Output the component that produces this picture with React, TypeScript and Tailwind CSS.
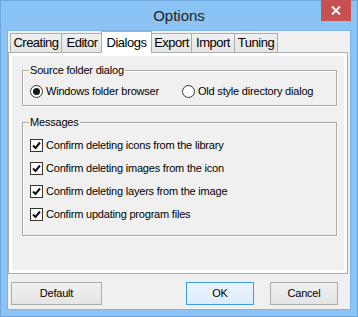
const ui = "font-['Liberation_Sans',Arial,sans-serif] text-[11px] tracking-[-0.2px] text-black";

const tabs = [
  { label: "Creating", cls: "ml-[2px] w-[52px]" },
  { label: "Editor", cls: "-ml-px w-[42px]" },
  { label: "Dialogs", cls: "-ml-[2px] w-[51px]", active: true },
  { label: "Export", cls: "-ml-px w-[41px]" },
  { label: "Import", cls: "-ml-px w-[44px]" },
  { label: "Tuning", cls: "-ml-px w-[44px]" },
];

const messages = [
  "Confirm deleting icons from the library",
  "Confirm deleting images from the icon",
  "Confirm deleting layers from the image",
  "Confirm updating program files",
];

const Radio = ({ checked }: { checked?: boolean }) => (
  <span className="w-[13px] h-[13px] rounded-full border border-[#333] bg-white flex items-center justify-center shrink-0">
    {checked && <span className="w-[7px] h-[7px] rounded-full bg-[#1a1a1a]" />}
  </span>
);

const Check = () => (
  <span className="w-[13px] h-[13px] border border-[#333] bg-white flex items-center justify-center shrink-0">
    <svg width="9" height="9" viewBox="0 0 9 9">
      <path d="M1 4.5 L3.5 7 L8 1.5" fill="none" stroke="#111" strokeWidth="2" />
    </svg>
  </span>
);

const Group = ({ title, className, children }: { title: string; className: string; children: React.ReactNode }) => (
  <div className={`relative border border-[#a9a9a9] shadow-[inset_1px_1px_0_#fff,1px_1px_0_#fff] ${className}`}>
    <span className="absolute -top-[8px] left-[6px] px-[1px] bg-[#f0f0f0] leading-[14px]">{title}</span>
    {children}
  </div>
);

const Button = ({ label, className }: { label: string; className: string }) => (
  <button className={`h-[23px] border flex items-center justify-center ${className}`}>{label}</button>
);

export default function App() {
  return (
    <div className={`w-[358px] h-[317px] bg-[#8cc3f5] border border-[#6ea6de] flex flex-col ${ui}`}>
      <div className="relative h-[29px] flex items-center justify-center">
        <span className="text-[15px] tracking-normal text-[#222] pt-[1px]">Options</span>
        <div className="absolute -top-px right-[6px] w-[30px] h-[21px] bg-[#c75050] flex items-center justify-center">
          <svg width="10" height="9" viewBox="0 0 10 9">
            <path d="M1 0.5 L9 8.5 M9 0.5 L1 8.5" stroke="#fff" strokeWidth="2" />
          </svg>
        </div>
      </div>

      <div className="mx-[6px] mb-[6px] flex-1 bg-[#f0f0f0] border border-[#7fb4e8] flex flex-col">
        <div className="h-[21px] flex items-end">
          {tabs.map((t) =>
            t.active ? (
              <div
                key={t.label}
                className={`relative z-10 h-[22px] -mb-px bg-white border border-b-0 border-[#acacac] flex items-center justify-center text-[13px] tracking-[-0.5px] ${t.cls}`}
              >
                {t.label}
              </div>
            ) : (
              <div
                key={t.label}
                className={`h-[19px] bg-gradient-to-b from-[#f0f0f0] to-[#e5e5e5] border border-b-0 border-[#acacac] flex items-center justify-center text-[13px] tracking-[-0.5px] ${t.cls}`}
              >
                {t.label}
              </div>
            )
          )}
        </div>

        <div className="h-[222px] mr-[2px] border border-[#acacac] bg-white p-[3px]">
          <div className="h-full bg-[#f0f0f0] pl-[10px] pr-[7px] pt-[14px] flex flex-col">
            <Group title="Source folder dialog" className="pl-[7px] pt-[14px] pb-[7px]">
              <div className="flex items-center h-[13px]">
                <div className="w-[152px] flex items-center gap-[3px]">
                  <Radio checked />
                  <span>Windows folder browser</span>
                </div>
                <div className="flex items-center gap-[3px]">
                  <Radio />
                  <span>Old style directory dialog</span>
                </div>
              </div>
            </Group>

            <Group title="Messages" className="mt-[16px] pl-[7px] pt-[16px] pb-[14px]">
              <div className="flex flex-col gap-[10px]">
                {messages.map((m) => (
                  <div key={m} className="flex items-center h-[13px] gap-[3px]">
                    <Check />
                    <span>{m}</span>
                  </div>
                ))}
              </div>
            </Group>
          </div>
        </div>

        <div className="mt-[8px] flex items-center">
          <Button label="Default" className="ml-[3px] w-[91px] border-[#acacac] bg-gradient-to-b from-[#f0f0f0] to-[#e5e5e5]" />
          <Button label="OK" className="ml-auto w-[68px] border-[#3c9ae8] bg-gradient-to-b from-[#ecf4fc] to-[#dcecfc]" />
          <Button label="Cancel" className="ml-[16px] mr-[12px] w-[68px] border-[#acacac] bg-gradient-to-b from-[#f0f0f0] to-[#e5e5e5]" />
        </div>
      </div>
    </div>
  );
}
